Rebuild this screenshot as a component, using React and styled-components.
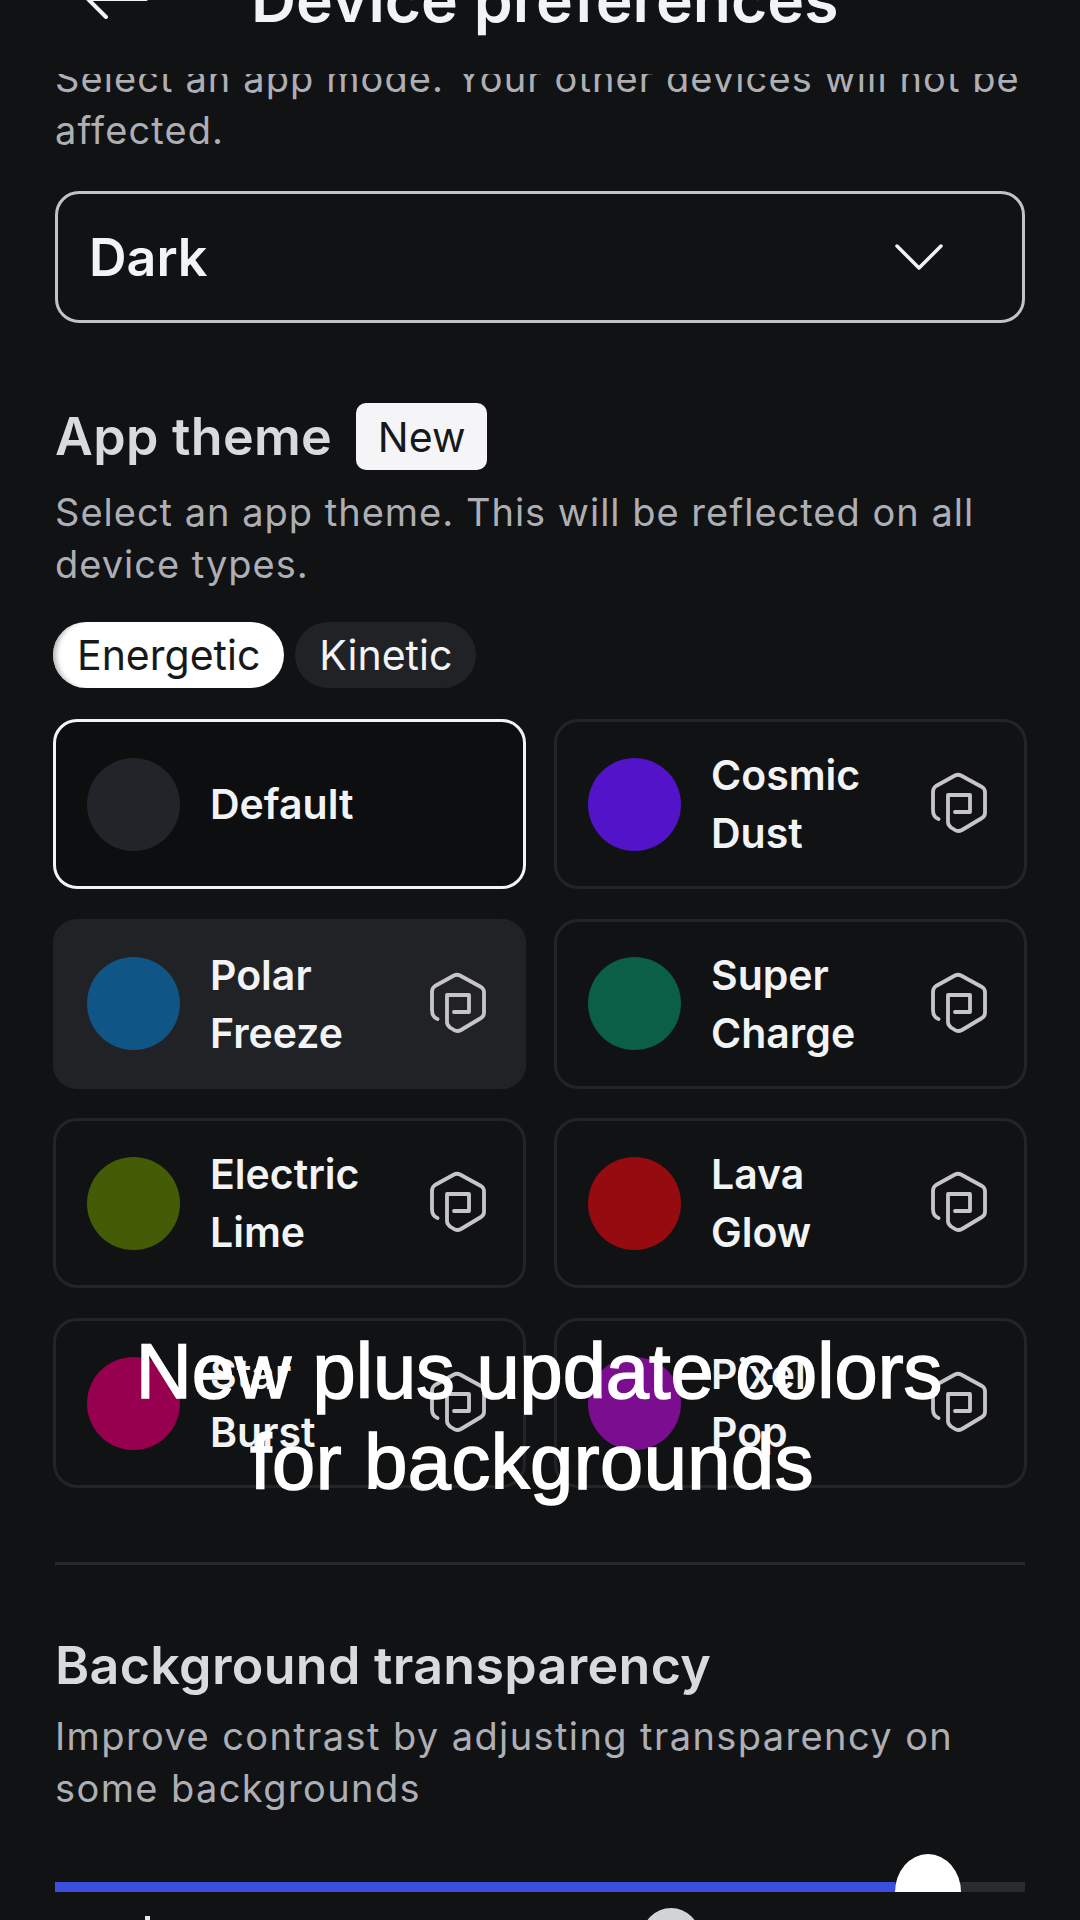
import React from 'react';
import styled, { createGlobalStyle } from 'styled-components';

const GlobalStyle = createGlobalStyle`
  html, body {
    margin: 0;
    background: #111214;
  }
  * {
    box-sizing: border-box;
  }
`;

const uiFont = `Inter, "Noto Sans", sans-serif`;

const Page = styled.div`
  position: relative;
  width: 1080px;
  height: 1920px;
  overflow: hidden;
  background: #111214;
  color: #f2f3f5;
  font-family: ${uiFont};
`;

// the header is scrolled partly off the top of the picture
const Header = styled.header`
  margin-top: -38px;
  height: 112px;
  overflow: hidden;
  display: flex;
  align-items: flex-start;
  gap: 103px;
  padding: 17px 0 0 86px;
`;

const BackArrow = styled.svg`
  flex: none;
  display: block;
`;

const Title = styled.h1`
  margin: -14px 0 0;
  font-size: 62.4px;
  font-weight: 600;
  line-height: 70px;
  white-space: nowrap;
`;

const Scroller = styled.main`
  height: 1846px;
  overflow: hidden;
  padding: 0 55px;
`;

const Clipped = styled.div`
  margin-top: -22px;
`;

const Description = styled.p`
  margin: ${p => p.$top || 0}px 0 0;
  font-size: 38px;
  letter-spacing: ${p => p.$spacing || 1}px;
  line-height: 52px;
  color: #aeafb4;
`;

const Select = styled.div`
  height: 132px;
  margin-top: 35px;
  border: 3px solid #c2c3c6;
  border-radius: 24px;
  display: flex;
  align-items: center;
  justify-content: space-between;
  padding: 0 78px 0 31px;
`;

const SelectValue = styled.span`
  font-size: 52px;
  font-weight: 600;
`;

const SectionHead = styled.div`
  display: flex;
  align-items: center;
  gap: 24px;
  margin-top: ${p => p.$top}px;
`;

const Heading = styled.h2`
  margin: 0;
  font-size: 52px;
  font-weight: 600;
  letter-spacing: 0.3px;
  line-height: 66px;
  color: #d9dadd;
`;

const NewBadge = styled.span`
  width: 131px;
  height: 67px;
  border-radius: 10px;
  background: #f5f5f7;
  color: #17181a;
  font-size: 41px;
  display: flex;
  align-items: center;
  justify-content: center;
`;

const Pills = styled.div`
  display: flex;
  gap: 11px;
  margin: 32px 0 31px -2px;
`;

const Pill = styled.span`
  height: 66px;
  padding: 0 24px;
  border-radius: 33px;
  background: ${p => (p.$active ? '#ffffff' : '#212226')};
  box-shadow: ${p => (p.$active ? 'inset 7px 0 5px -4px #b4b4b8' : 'none')};
  color: ${p => (p.$active ? '#17181a' : '#f2f3f5')};
  font-size: 41px;
  display: flex;
  align-items: center;
`;

const ThemeGrid = styled.div`
  display: grid;
  grid-template-columns: 473px 473px;
  grid-auto-rows: 170px;
  gap: 29.7px 28px;
  margin: 0 -2px;
`;

const ThemeCard = styled.div`
  border-radius: 24px;
  border: 3px solid ${p => (p.$selected ? '#f2f3f5' : p.$hover ? '#212226' : '#232428')};
  background: ${p => (p.$selected ? '#0d0e10' : p.$hover ? '#212226' : '#111214')};
  display: flex;
  align-items: center;
  padding: 0 35px 0 31px;
`;

const Swatch = styled.span`
  flex: none;
  width: 93px;
  height: 93px;
  border-radius: 50%;
  background: ${p => p.$color};
`;

const ThemeName = styled.span`
  flex: 1;
  margin-left: 30px;
  font-size: 41px;
  font-weight: 600;
  line-height: 58px;
  white-space: pre-line;
`;

const Rule = styled.hr`
  margin: 74px 0 0;
  border: 0;
  height: 3px;
  background: #28292d;
`;

const Slider = styled.div`
  position: relative;
  height: 10px;
  margin-top: 68px;
  background: #2a2b2f;
`;

const SliderFill = styled.div`
  height: 100%;
  background: #3c4ee0;
`;

const SliderThumb = styled.span`
  position: absolute;
  bottom: 0;
  width: 66px;
  height: 38px;
  background: #ffffff;
  border-radius: 50% 50% 0 0 / 100% 100% 0 0;
`;

const LowerThumb = styled.span`
  position: absolute;
  left: 642px;
  top: 1908px;
  width: 58px;
  height: 58px;
  border-radius: 50%;
  background: #d2d3d6;
`;

const LowerTick = styled.span`
  position: absolute;
  left: 145px;
  top: 1916px;
  width: 5px;
  height: 4px;
  background: #e8e8ea;
`;

const Caption = styled.div`
  position: absolute;
  left: 0;
  right: 0;
  top: 1326px;
  padding-right: 2px;
  font-family: "Liberation Sans", Arial, sans-serif;
  font-size: 77.6px;
  line-height: 91px;
  color: #ffffff;
  -webkit-text-stroke: 1.5px #ffffff;
  text-align: center;
  pointer-events: none;
`;

const CaptionLine = styled.div`
  margin-right: ${p => p.$shift || 0}px;
  letter-spacing: ${p => p.$spacing || 0}px;
`;

const PlanIcon = () => (
  <svg width="60" height="64" viewBox="0 0 60 64" fill="none" stroke="#c6c6ca" strokeWidth="3.8" strokeLinecap="round" strokeLinejoin="round">
    <path d="M9.5 47 Q4 45 4 38 V20 Q4 16 7 14 L26 3.5 Q29 2 32 3.5 L53 15 Q56 17 56 20 V41 Q56 44 53 46 L33 58 Q29 60 26 58 L22 55.5 Q19 53 19 50 V23 H41 V40 H26" />
  </svg>
);

const themes = [
  { name: 'Default', color: '#232429', selected: true },
  { name: 'Cosmic\nDust', color: '#5213c9', plan: true },
  { name: 'Polar\nFreeze', color: '#0f5585', plan: true, hover: true },
  { name: 'Super\nCharge', color: '#0b5f45', plan: true },
  { name: 'Electric\nLime', color: '#445c06', plan: true },
  { name: 'Lava\nGlow', color: '#960b10', plan: true },
  { name: 'Star\nBurst', color: '#96004e', plan: true },
  { name: 'Pixel\nPop', color: '#7b0d8f', plan: true },
];

export default function App() {
  return (
    <Page>
      <GlobalStyle />
      <Header>
        <BackArrow width="62" height="40" viewBox="0 0 62 40" fill="none" stroke="#f2f3f5" strokeWidth="4" strokeLinecap="round" strokeLinejoin="round">
          <path d="M2 20 L60 20 M2 20 L20 2 M2 20 L20 38" />
        </BackArrow>
        <Title>Device preferences</Title>
      </Header>

      <Scroller>
        <Clipped>
          <Description $spacing={1.1}>
            Select an app mode. Your other devices will not be affected.
          </Description>
        </Clipped>

        <Select>
          <SelectValue>Dark</SelectValue>
          <svg width="50" height="28" viewBox="0 0 50 28" fill="none" stroke="#f2f3f5" strokeWidth="3.5" strokeLinecap="round" strokeLinejoin="round">
            <path d="M3 3 L25 25 L47 3" />
          </svg>
        </Select>

        <SectionHead $top={80}>
          <Heading>App theme</Heading>
          <NewBadge>New</NewBadge>
        </SectionHead>
        <Description $top={16}>
          Select an app theme. This will be reflected on all device types.
        </Description>

        <Pills>
          <Pill $active>Energetic</Pill>
          <Pill>Kinetic</Pill>
        </Pills>

        <ThemeGrid>
          {themes.map(theme => (
            <ThemeCard key={theme.name} $selected={theme.selected} $hover={theme.hover}>
              <Swatch $color={theme.color} />
              <ThemeName>{theme.name}</ThemeName>
              {theme.plan && <PlanIcon />}
            </ThemeCard>
          ))}
        </ThemeGrid>

        <Rule />

        <SectionHead $top={68}>
          <Heading>Background transparency</Heading>
        </SectionHead>
        <Description $top={11} $spacing={1.4}>
          Improve contrast by adjusting transparency on some backgrounds
        </Description>

        <Slider>
          <SliderFill style={{ width: '86.6%' }} />
          <SliderThumb style={{ left: '86.6%' }} />
        </Slider>
      </Scroller>

      <LowerTick />
      <LowerThumb />

      <Caption>
        <CaptionLine>New plus update colors</CaptionLine>
        <CaptionLine $shift={14} $spacing={0.5}>for backgrounds</CaptionLine>
      </Caption>
    </Page>
  );
}
